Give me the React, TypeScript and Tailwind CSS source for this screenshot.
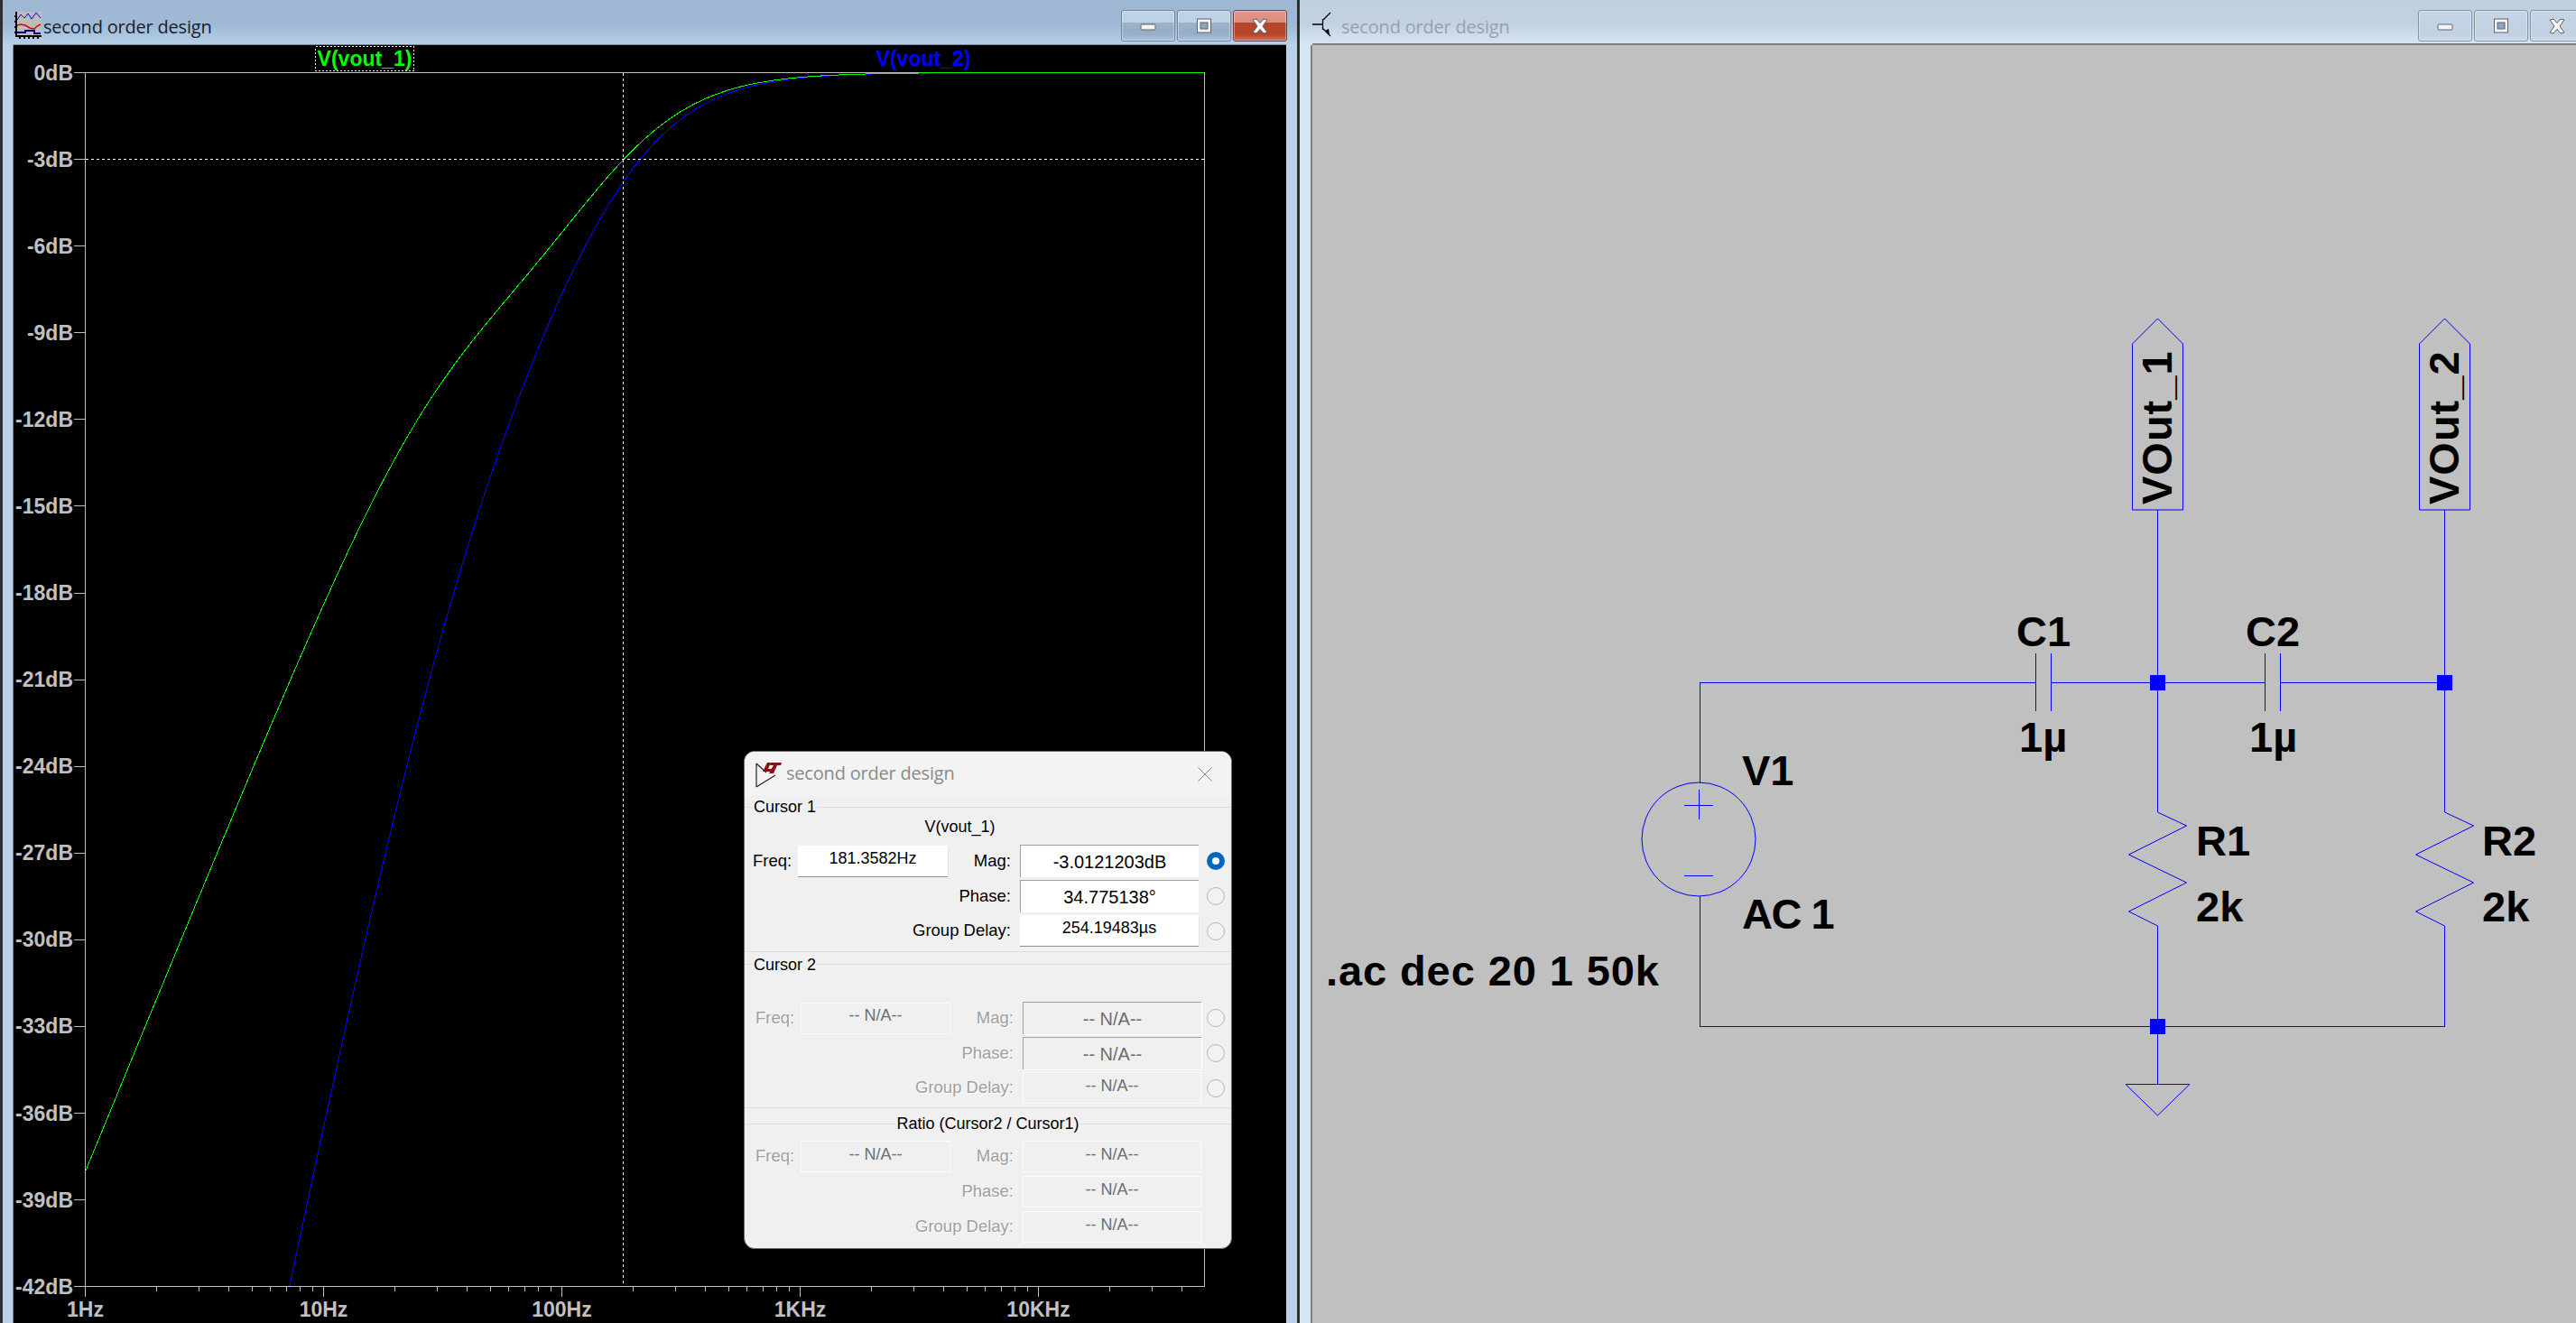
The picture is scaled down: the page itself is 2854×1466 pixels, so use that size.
import { ReactNode } from "react";

const PLOT = { left: 94.5, right: 1334, top: 80.5, bottom: 1425, decade: 264, perDb: 32.03 };

const xOf = (f: number) => PLOT.left + Math.log10(f) * PLOT.decade;
const yOf = (db: number) => PLOT.top - db * PLOT.perDb;

// response of the two stage RC ladder, R=2k C=1u
function response(f: number) {
  const x = 2 * Math.PI * f * 2000 * 1e-6;
  const zi = -1 / x;
  const den = Math.hypot(1 - zi * zi, 3 * zi);
  return {
    v1: 20 * Math.log10(Math.hypot(1, zi) / den),
    v2: 20 * Math.log10(1 / den),
  };
}

function tracePoints(key: "v1" | "v2") {
  const pts: string[] = [];
  for (let i = 0; i <= 94; i++) {
    const f = Math.min(Math.pow(10, i / 20), 50000);
    pts.push(`${xOf(f).toFixed(1)},${yOf(response(f)[key]).toFixed(1)}`);
  }
  return pts.join(" ");
}

const dbTicks = Array.from({ length: 15 }, (_, i) => -3 * i);
const decades = [
  { f: 1, label: "1Hz" },
  { f: 10, label: "10Hz" },
  { f: 100, label: "100Hz" },
  { f: 1000, label: "1KHz" },
  { f: 10000, label: "10KHz" },
];

function minorTicks() {
  const out: number[] = [];
  for (const d of decades) {
    for (let m = 2; m < 10; m++) {
      const x = xOf(d.f * m);
      if (x < PLOT.right) out.push(x);
    }
  }
  return out;
}

function WaveIcon() {
  return (
    <svg width="30" height="30" viewBox="0 0 30 30" className="mr-[2px] shrink-0" shapeRendering="crispEdges">
      <rect x="2" y="0" width="28" height="26" fill="#bdbdbd" />
      <path d="M2 0V27H30" fill="none" stroke="#000" strokeWidth="1.5" />
      <path d="M0 5H2M0 11H2M0 17H2M0 23H2M6 27V30M11 27V30M16 27V30M21 27V30M26 27V30" stroke="#000" strokeWidth="1.5" />
      <path d="M3 9L7 3L11 7L15 2L19 8L24 1L29 7" fill="none" stroke="#0000d0" strokeWidth="1" shapeRendering="auto" />
      <path d="M3 15L7 14L12 15L17 18L22 19L25 16L29 14" fill="none" stroke="#e00000" strokeWidth="1.5" shapeRendering="auto" />
      <path d="M3 23H12V21H22V24H29" fill="none" stroke="#000080" strokeWidth="1.5" />
    </svg>
  );
}

function TransistorIcon() {
  return (
    <svg width="26" height="30" viewBox="0 0 26 30" className="mr-[6px] shrink-0">
      <path d="M0 14H11M11.5 8V20M12 9L20 1M12 19L20 27" fill="none" stroke="#000" strokeWidth="1.3" />
      <path d="M14 21L18 19L19 25Z" fill="#000" />
    </svg>
  );
}

function LtLogo() {
  return (
    <svg width="30" height="30" viewBox="0 0 30 30" className="mr-[4px] shrink-0">
      <path d="M1 3L12 13M1 29L22 16M1 3V29" fill="none" stroke="#222" strokeWidth="1.2" />
      <path d="M8 12L13 2H17L14 9H19L17 12ZM17 2H29L28 5H24L20 14H15L20 5H16Z" fill="#8b1212" />
    </svg>
  );
}

function WinButton({ kind, tone }: { kind: "min" | "max" | "close"; tone: "active" | "inactive" }) {
  const shell =
    kind === "close" && tone === "active"
      ? "border-[#7a4038] bg-[linear-gradient(#e0988a_0%,#dc8b7b_38%,#b5452b_40%,#b5452b_78%,#d07058_100%)]"
      : tone === "active"
        ? "border-[#71859e] bg-[linear-gradient(#c0d3e8_0%,#bcd0e6_38%,#9ab2cc_40%,#96aec8_78%,#aec5dc_100%)]"
        : "border-[#8494a8] bg-[linear-gradient(#c5d4e4_0%,#c3d2e3_80%,#ccdae9_100%)]";
  return (
    <div className={`flex h-[35px] w-[60px] shrink-0 items-center justify-center rounded-[3px] border shadow-[inset_0_0_0_1px_rgba(255,255,255,0.35)] ${shell}`}>
      <svg width="20" height="20" viewBox="0 0 20 20">
        {kind === "min" && <rect x="2" y="8" width="16" height="6" rx="1" fill="#f4f4f4" stroke="#5d6470" strokeWidth="1" />}
        {kind === "max" && (
          <g>
            <rect x="2.5" y="2" width="15" height="15" fill="#f4f4f4" stroke="#5d6470" strokeWidth="1" />
            <rect x="6" y="6" width="8" height="7" fill="#8ea5bf" stroke="#5d6470" strokeWidth="1" />
          </g>
        )}
        {kind === "close" && (
          <path d="M2 3L6 2L10 6.5L14 2L18 3L13 10L18 17L14 18L10 13.5L6 18L2 17L7 10Z" fill="#f6f6f6" stroke="#5d5d5d" strokeWidth="1" />
        )}
      </svg>
    </div>
  );
}

function TitleBar({ tone, icon, right }: { tone: "active" | "inactive"; icon: ReactNode; right: string }) {
  const bar =
    tone === "active"
      ? "pl-[13px] bg-[linear-gradient(#9db6d2,#a0b9d4_55%,#b8d1ea)] text-[#17212e]"
      : "pl-[14px] bg-[linear-gradient(#c0cfde,#c3d2e1_55%,#d8e6f4)] text-[#9a9fa6]";
  return (
    <div className={`flex h-[50px] shrink-0 items-center pt-[6px] ${bar}`}>
      {icon}
      <span className="mt-[4px] font-['Open_Sans',sans-serif] text-[20px] leading-none tracking-[-0.2px]">second order design</span>
      <div className={`ml-auto flex gap-[2px] self-start mt-[5px] ${right}`}>
        <WinButton kind="min" tone={tone} />
        <WinButton kind="max" tone={tone} />
        <WinButton kind="close" tone={tone} />
      </div>
    </div>
  );
}

function Plot() {
  const { left, right, top, bottom } = PLOT;
  const cursorX = xOf(181.3582);
  const cursorY = yOf(-3.0121203);
  return (
    <svg viewBox="15 50 1410 1416" className="block h-full w-full font-['Liberation_Sans',sans-serif] text-[23px] font-bold">
      <defs>
        <clipPath id="plot-area">
          <rect x={left} y={top - 2} width={right - left} height={bottom - top + 2} />
        </clipPath>
      </defs>
      <g stroke="#c0c0c0" strokeWidth="1" shapeRendering="crispEdges">
        <rect x={left} y={top} width={right - left} height={bottom - top} fill="none" />
        {dbTicks.map((db) => (
          <line key={db} x1="82" x2={left} y1={yOf(db)} y2={yOf(db)} />
        ))}
        {decades.map((d) => (
          <line key={d.f} x1={xOf(d.f)} x2={xOf(d.f)} y1={bottom} y2={bottom + 12} />
        ))}
        {minorTicks().map((x) => (
          <line key={x} x1={x} x2={x} y1={bottom} y2={bottom + 6} />
        ))}
      </g>
      {dbTicks.map((db) => (
        <text key={db} x="81" y={yOf(db) + 8} textAnchor="end" className="fill-[#c0c0c0]">
          {db}dB
        </text>
      ))}
      {decades.map((d) => (
        <text key={d.f} x={xOf(d.f)} y="1459" textAnchor="middle" className="fill-[#c0c0c0]">
          {d.label}
        </text>
      ))}
      <g clipPath="url(#plot-area)" fill="none" strokeWidth="1" shapeRendering="crispEdges">
        <polyline points={tracePoints("v2")} stroke="#0000ff" />
        <polyline points={tracePoints("v1")} stroke="#00ff00" />
      </g>
      <g stroke="#ffffff" strokeDasharray="3 3" shapeRendering="crispEdges">
        <line x1={cursorX} x2={cursorX} y1={top} y2={bottom} />
        <line x1={left} x2={right} y1={cursorY} y2={cursorY} />
      </g>
      <rect x="349.5" y="51.5" width="109" height="27" fill="none" stroke="#ffffff" strokeDasharray="2 2" shapeRendering="crispEdges" />
      <text x="404" y="73" textAnchor="middle" className="fill-[#00ff00]">
        V(vout_1)
      </text>
      <text x="1023" y="73" textAnchor="middle" className="fill-[#0000ff]">
        V(vout_2)
      </text>
    </svg>
  );
}

const resistor = (x: number) =>
  `${x},900 ${x + 32},915 ${x - 32},947 ${x + 32},978 ${x - 32},1010 ${x},1026`;
const netLabel = (x: number) =>
  `${x},353 ${x + 28},381 ${x + 28},565 ${x - 28},565 ${x - 28},381`;

const schematicText = [
  { x: 2234, y: 716, t: "C1" },
  { x: 2237, y: 833, t: "1µ" },
  { x: 2488, y: 716, t: "C2" },
  { x: 2492, y: 833, t: "1µ" },
  { x: 1930, y: 870, t: "V1" },
  { x: 1930, y: 1029, t: "AC 1", cls: "tracking-[-1.5px]" },
  { x: 2433, y: 948, t: "R1" },
  { x: 2433, y: 1021, t: "2k" },
  { x: 2750, y: 948, t: "R2" },
  { x: 2750, y: 1021, t: "2k" },
  { x: 1469, y: 1092, t: ".ac dec 20 1 50k", cls: "tracking-[0.9px]" },
];

function Schematic() {
  const n1 = 2390.5;
  const n2 = 2708.5;
  const topY = 756.5;
  const botY = 1137.5;
  return (
    <svg viewBox="1454 50 1400 1416" className="block h-full w-full font-['Liberation_Sans',sans-serif] text-[47px] font-bold">
      <g fill="none" stroke="#0000ff" strokeWidth="1" shapeRendering="crispEdges">
        <path d={`M1883 868V${topY}H2255M2272 ${topY}H2509M2526 ${topY}H${n2}`} />
        <path d={`M1883 993V${botY}H${n2}V1026M${n2} 900V565M${n1} 900V565M${n1} 1026V1201`} />
        <path d="M2255 724V788M2272 724V788M2509 724V788M2526 724V788" />
        <path d="M1866 892H1898M1882 875V908M1866 970H1898" />
      </g>
      <g fill="none" stroke="#0000ff" strokeWidth="1">
        <circle cx="1882" cy="930" r="63" />
        <polyline points={resistor(n1)} />
        <polyline points={resistor(n2)} />
        <polygon points={netLabel(n1)} />
        <polygon points={netLabel(n2)} />
        <polygon points={`2355,1201.5 2426,1201.5 ${n1},1236`} />
      </g>
      <g fill="#0000ff">
        <rect x={n1 - 8.5} y={topY - 8.5} width="17" height="17" />
        <rect x={n2 - 8.5} y={topY - 8.5} width="17" height="17" />
        <rect x={n1 - 8.5} y={botY - 8.5} width="17" height="17" />
      </g>
      {schematicText.map((l) => (
        <text key={`${l.x}-${l.y}`} x={l.x} y={l.y} className={l.cls}>
          {l.t}
        </text>
      ))}
      <text transform="translate(2406 559) rotate(-90)" className="tracking-[1px]">
        VOut_1
      </text>
      <text transform="translate(2724 559) rotate(-90)" className="tracking-[1px]">
        VOut_2
      </text>
    </svg>
  );
}

function Radio({ checked }: { checked?: boolean }) {
  if (checked) {
    return (
      <span className="flex h-[20px] w-[20px] items-center justify-center rounded-full bg-[#0067c0]">
        <span className="h-[8px] w-[8px] rounded-full bg-white" />
      </span>
    );
  }
  return <span className="block h-[20px] w-[20px] rounded-full border border-[#b4b4b4] bg-[#f2f2f2]" />;
}

type Field = { value: string; sunken?: boolean };

function Box({ field, disabled }: { field: Field; disabled?: boolean }) {
  const tone = disabled ? "text-[#6e6e6e]" : "text-black";
  if (field.sunken) {
    return (
      <div
        className={`flex h-[36px] items-center justify-center border-t border-l border-t-[#a0a0a0] border-l-[#a0a0a0] text-[20px] ${tone} ${disabled ? "shadow-[1px_1px_0_#ffffff]" : "bg-white"}`}
      >
        {field.value}
      </div>
    );
  }
  const edge = disabled
    ? "border border-[#fbfbfb]"
    : "border-b border-b-[#8f8f8f] bg-white shadow-[1px_0_0_#e4e4e4]";
  return <div className={`flex h-[35px] items-center justify-center pb-[5px] text-[18px] ${tone} ${edge}`}>{field.value}</div>;
}

function Label({ children, disabled, className = "" }: { children: ReactNode; disabled?: boolean; className?: string }) {
  const tone = disabled ? "text-[#a0a0a0] [text-shadow:1px_1px_0_#ffffff]" : "text-black";
  return <div className={`text-[18.5px] leading-none ${tone} ${className}`}>{children}</div>;
}

type Row = { label: string; field: Field; freq?: Field; radio?: "on" | "off" };

function Rows({ rows, disabled, rowClass }: { rows: Row[]; disabled?: boolean; rowClass: string }) {
  return (
    <div className={`flex flex-col gap-[4px] pr-[7px] ${rowClass}`}>
      {rows.map((r) => (
        <div key={r.label} className="grid h-[35px] grid-cols-[50px_166px_70px_208px_1fr] items-center">
          {r.freq ? <Label disabled={disabled}>Freq:</Label> : <div />}
          {r.freq ? <Box field={r.freq} disabled={disabled} /> : <div />}
          <Label disabled={disabled} className="flex justify-end whitespace-nowrap">
            {r.label}
          </Label>
          <div className="ml-[10px]">
            <Box field={r.field} disabled={disabled} />
          </div>
          <div className="flex justify-end">{r.radio && <Radio checked={r.radio === "on"} />}</div>
        </div>
      ))}
    </div>
  );
}

function Legend({ children, center, className }: { children: ReactNode; center?: boolean; className: string }) {
  return (
    <div className={`flex items-center text-[18px] leading-none text-black ${className}`}>
      <div className={center ? "h-px flex-1 bg-[#dcdcdc]" : "h-px w-[9px] bg-[#dcdcdc]"} />
      <span className="px-[1px]">{children}</span>
      <div className="h-px flex-1 bg-[#dcdcdc]" />
    </div>
  );
}

const cursor1: Row[] = [
  { label: "Mag:", freq: { value: "181.3582Hz" }, field: { value: "-3.0121203dB", sunken: true }, radio: "on" },
  { label: "Phase:", field: { value: "34.775138°", sunken: true }, radio: "off" },
  { label: "Group Delay:", field: { value: "254.19483µs" }, radio: "off" },
];
const cursor2: Row[] = [
  { label: "Mag:", freq: { value: "-- N/A--" }, field: { value: "-- N/A--", sunken: true }, radio: "off" },
  { label: "Phase:", field: { value: "-- N/A--", sunken: true }, radio: "off" },
  { label: "Group Delay:", field: { value: "-- N/A--" }, radio: "off" },
];
const ratio: Row[] = [
  { label: "Mag:", freq: { value: "-- N/A--" }, field: { value: "-- N/A--" } },
  { label: "Phase:", field: { value: "-- N/A--" } },
  { label: "Group Delay:", field: { value: "-- N/A--" } },
];

function CursorDialog() {
  return (
    <div className="absolute left-[824px] top-[832px] h-[552px] w-[541px] overflow-hidden rounded-[12px] border border-[#6a6a6a] bg-[#f0f0f0] font-['Liberation_Sans',sans-serif]">
      <div className="flex h-[49px] items-center bg-[#f3f3f3] pl-[12px] pr-[21px]">
        <LtLogo />
        <span className="mb-[2px] font-['Open_Sans',sans-serif] text-[20px] leading-none tracking-[-0.2px] text-[#8a8a8a]">second order design</span>
        <svg width="16" height="16" viewBox="0 0 16 16" className="ml-auto">
          <path d="M0.5 0.5L15.5 15.5M15.5 0.5L0.5 15.5" stroke="#8a8a8a" strokeWidth="1" fill="none" />
        </svg>
      </div>
      <Legend className="h-[24px]">Cursor 1</Legend>
      <div className="flex h-[30px] items-center justify-center pb-[10px] pr-[62px] text-[18px] leading-none text-black">V(vout_1)</div>
      <Rows rows={cursor1} rowClass="pl-[9px]" />
      <div className="mt-[5px] border-t border-[#dcdcdc]" />
      <Legend className="h-[27px]">Cursor 2</Legend>
      <Rows rows={cursor2} disabled rowClass="mt-[28px] pl-[12px]" />
      <div className="mt-[4px] border-t border-[#dcdcdc]" />
      <Legend center className="h-[34px]">
        Ratio (Cursor2 / Cursor1)
      </Legend>
      <Rows rows={ratio} disabled rowClass="mt-[2px] pl-[12px]" />
    </div>
  );
}

export default function App() {
  return (
    <div className="relative flex h-[1466px] w-[2854px] overflow-hidden bg-[#b9d1ea]">
      <div className="flex h-full w-[1440px] shrink-0 flex-col border-x-[3px] border-x-[#2e2e2e] bg-[#b9d1ea]">
        <TitleBar tone="active" icon={<WaveIcon />} right="pr-[11px]" />
        <div className="min-h-0 flex-1 pl-[12px] pr-[12px]">
          <div className="h-full bg-black shadow-[0_-1px_0_#7c8894,-1px_0_0_#7c8894]">
            <Plot />
          </div>
        </div>
      </div>
      <div className="flex h-full min-w-0 flex-1 flex-col bg-[#d7e5f3]">
        <TitleBar tone="inactive" icon={<TransistorIcon />} right="mr-[-9px]" />
        <div className="min-h-0 flex-1 pl-[14px]">
          <div className="h-full bg-[#c0c0c0] shadow-[0_-2px_0_#7f7f7f,-2px_0_0_#7f7f7f]">
            <Schematic />
          </div>
        </div>
      </div>
      <CursorDialog />
    </div>
  );
}
